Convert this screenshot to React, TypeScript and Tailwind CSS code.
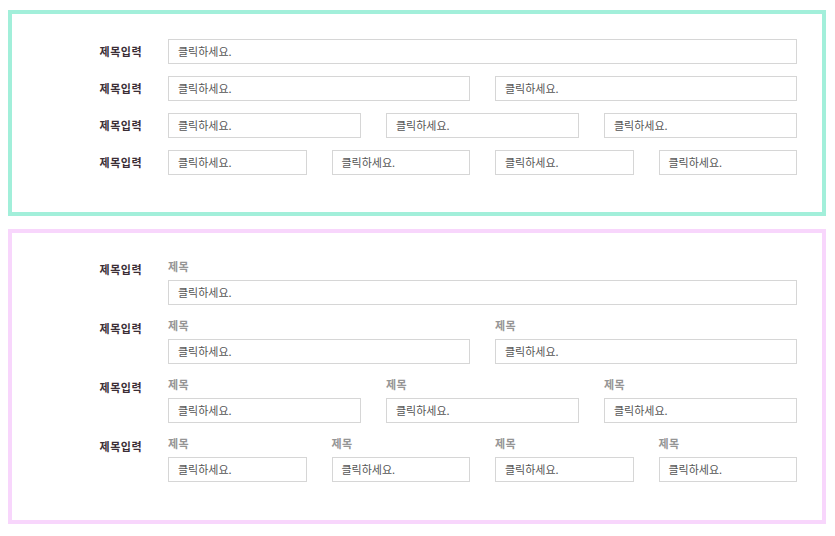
import React from "react";

const font = { fontFamily: '"Noto Sans CJK KR", "Noto Sans", sans-serif' };

const Field = () => (
    <div className="h-[25px] border border-[#d6d6d6] bg-white flex items-center pl-[9px] text-[11px] text-[#555]">
        클릭하세요.
    </div>
);

const cols: Record<number, string> = {
    1: "grid-cols-1",
    2: "grid-cols-2",
    3: "grid-cols-3",
    4: "grid-cols-4",
};

function PlainRow({ count }: { count: number }) {
    return (
        <div className="flex items-center">
            <div className="w-[130px] shrink-0 text-right text-[11px] font-bold tracking-[0.5px] text-[#3b2e36]">제목입력</div>
            <div className={`ml-[26px] flex-1 grid gap-x-[25px] ${cols[count]}`}>
                {Array.from({ length: count }).map((_, i) => (
                    <Field key={i} />
                ))}
            </div>
        </div>
    );
}

function TitledRow({ count }: { count: number }) {
    return (
        <div className="flex items-start">
            <div className="w-[130px] shrink-0 text-right text-[11px] font-bold tracking-[0.5px] text-[#3b2e36] leading-[22px]">제목입력</div>
            <div className={`ml-[26px] flex-1 grid gap-x-[25px] ${cols[count]}`}>
                {Array.from({ length: count }).map((_, i) => (
                    <div key={i}>
                        <div className="h-[22px] leading-[16px] text-[11px] font-bold tracking-[0.5px] text-[#959595]">제목</div>
                        <Field />
                    </div>
                ))}
            </div>
        </div>
    );
}

export default function App() {
    return (
        <div className="w-[835px] h-[536px] bg-white pt-[10px] pl-[8px] pr-[9px]" style={font}>
            <div className="border-4 border-[#a2efda] pt-[25px] pb-[37px] pr-[25px] flex flex-col gap-[12px]">
                <PlainRow count={1} />
                <PlainRow count={2} />
                <PlainRow count={3} />
                <PlainRow count={4} />
            </div>
            <div className="mt-[13px] border-4 border-[#f8d6fc] pt-[25px] pb-[38px] pr-[25px] flex flex-col gap-[12px]">
                <TitledRow count={1} />
                <TitledRow count={2} />
                <TitledRow count={3} />
                <TitledRow count={4} />
            </div>
        </div>
    );
}
